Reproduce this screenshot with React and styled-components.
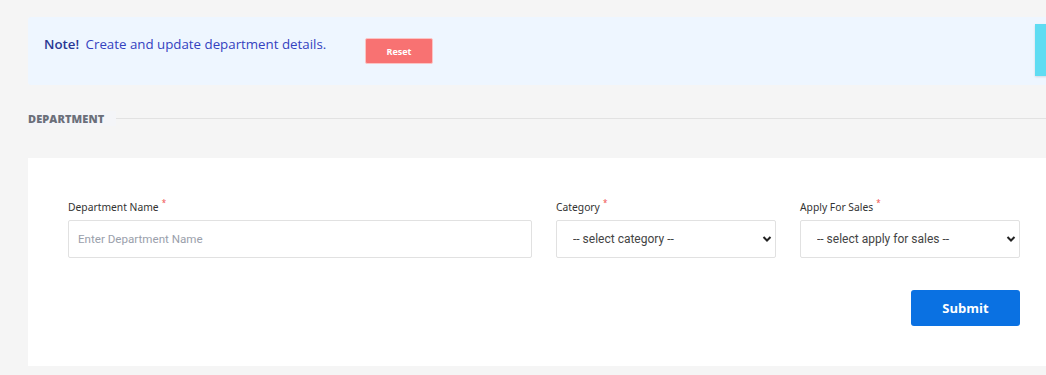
import styled, { createGlobalStyle } from 'styled-components';

const GlobalStyle = createGlobalStyle`
  html, body {
    margin: 0;
    padding: 0;
    overflow: hidden;
    background: #f5f5f5;
  }
`;

const StyledPage = styled.div`
  width: 1040px;
  padding: 17px 0 0 28px;
  font-family: "Noto Sans", "Open Sans", sans-serif;
`;

const StyledAlert = styled.div`
  display: flex;
  align-items: flex-start;
  height: 68px;
  box-sizing: border-box;
  padding: 18px 0 0 16px;
  background: #eef6ff;
  border-radius: 3px 0 0 3px;
`;

const StyledNote = styled.p`
  margin: 0;
  width: 321px;
  font-family: "Open Sans", sans-serif;
  font-size: 13.3px;
  color: #3442c0;

  strong {
    color: #293893;
    font-weight: 600;
    margin-right: 3px;
  }
`;

const StyledResetButton = styled.button`
  margin-top: 3px;
  width: 68px;
  height: 26px;
  border: 1px solid #fbc4c4;
  border-radius: 2px;
  background: #f87272;
  color: #fff;
  font-family: "Open Sans", sans-serif;
  font-size: 9px;
  font-weight: 700;
  cursor: pointer;
`;

const StyledSideTab = styled.div`
  margin: -11px 0 0 auto;
  width: 33px;
  height: 52px;
  background: #5fdcf2;
  box-shadow: 0 1px 2px rgba(0, 0, 0, 0.12);
`;

const StyledSectionHeader = styled.div`
  display: flex;
  align-items: center;
  margin: 26px 0 32px;
  height: 15px;

  h2 {
    margin: 0;
    padding-right: 12px;
    background: #f4f5f8;
    font-family: "Open Sans", sans-serif;
    font-size: 11px;
    font-weight: 800;
    letter-spacing: 0.1px;
    color: #6b6f7a;
    line-height: 15px;
  }

  &::after {
    content: '';
    flex: 1;
    height: 1px;
    background: #e2e2e2;
  }
`;

const StyledCard = styled.div`
  background: #fff;
  padding: 42px 40px 40px;
`;

const StyledFieldsRow = styled.div`
  display: grid;
  grid-template-columns: 464px 220px 220px;
  column-gap: 24px;
`;

const StyledField = styled.label`
  display: flex;
  flex-direction: column;
  gap: 6px;
`;

const StyledLabel = styled.span`
  font-size: 10.3px;
  color: #333;
  line-height: 14px;

  sup {
    color: #f05252;
    font-size: 8px;
    margin-left: 3px;
    vertical-align: 5px;
    line-height: 0;
  }
`;

const StyledInput = styled.input`
  height: 38px;
  box-sizing: border-box;
  border: 1px solid #e1e1e1;
  border-radius: 2px;
  padding: 0 9px;
  font-family: Roboto, sans-serif;
  font-size: 11.6px;
  color: #333;

  &::placeholder {
    color: #9aa0ab;
  }
`;

const StyledSelectWrap = styled.div`
  position: relative;

  svg {
    position: absolute;
    right: 4px;
    top: 15px;
    pointer-events: none;
  }
`;

const StyledSelect = styled.select`
  width: 100%;
  height: 38px;
  box-sizing: border-box;
  appearance: none;
  border: 1px solid #e1e1e1;
  border-radius: 2px;
  background: #fff;
  padding: 0 16px;
  font-family: Roboto, sans-serif;
  font-size: 12px;
  color: #444;
`;

const StyledActions = styled.div`
  display: flex;
  justify-content: flex-end;
  margin-top: 32px;
  width: 952px;
`;

const StyledSubmitButton = styled.button`
  width: 109px;
  height: 36px;
  border: none;
  border-radius: 3px;
  background: #0a71e2;
  color: #fff;
  font-family: "Open Sans", sans-serif;
  font-size: 13px;
  font-weight: 700;
  cursor: pointer;
`;

const Chevron = () => (
  <svg width="10" height="8" viewBox="0 0 10 8">
    <path d="M1.5 2 L5 5.5 L8.5 2" fill="none" stroke="#222" strokeWidth="2" />
  </svg>
);

const SelectField = ({ label, placeholder }) => (
  <StyledField>
    <StyledLabel>
      {label}
      <sup>*</sup>
    </StyledLabel>
    <StyledSelectWrap>
      <StyledSelect defaultValue="">
        <option value="">{placeholder}</option>
      </StyledSelect>
      <Chevron />
    </StyledSelectWrap>
  </StyledField>
);

const App = () => {
  return (
    <>
      <GlobalStyle />
      <StyledPage>
        <StyledAlert>
          <StyledNote>
            <strong>Note!</strong> Create and update department details.
          </StyledNote>
          <StyledResetButton type="button">Reset</StyledResetButton>
          <StyledSideTab />
        </StyledAlert>

        <StyledSectionHeader>
          <h2>DEPARTMENT</h2>
        </StyledSectionHeader>

        <StyledCard>
          <StyledFieldsRow>
            <StyledField>
              <StyledLabel>
                Department Name
                <sup>*</sup>
              </StyledLabel>
              <StyledInput placeholder="Enter Department Name" />
            </StyledField>
            <SelectField label="Category" placeholder="-- select category --" />
            <SelectField label="Apply For Sales" placeholder="-- select apply for sales --" />
          </StyledFieldsRow>
          <StyledActions>
            <StyledSubmitButton type="button">Submit</StyledSubmitButton>
          </StyledActions>
        </StyledCard>
      </StyledPage>
    </>
  );
};

export default App;
